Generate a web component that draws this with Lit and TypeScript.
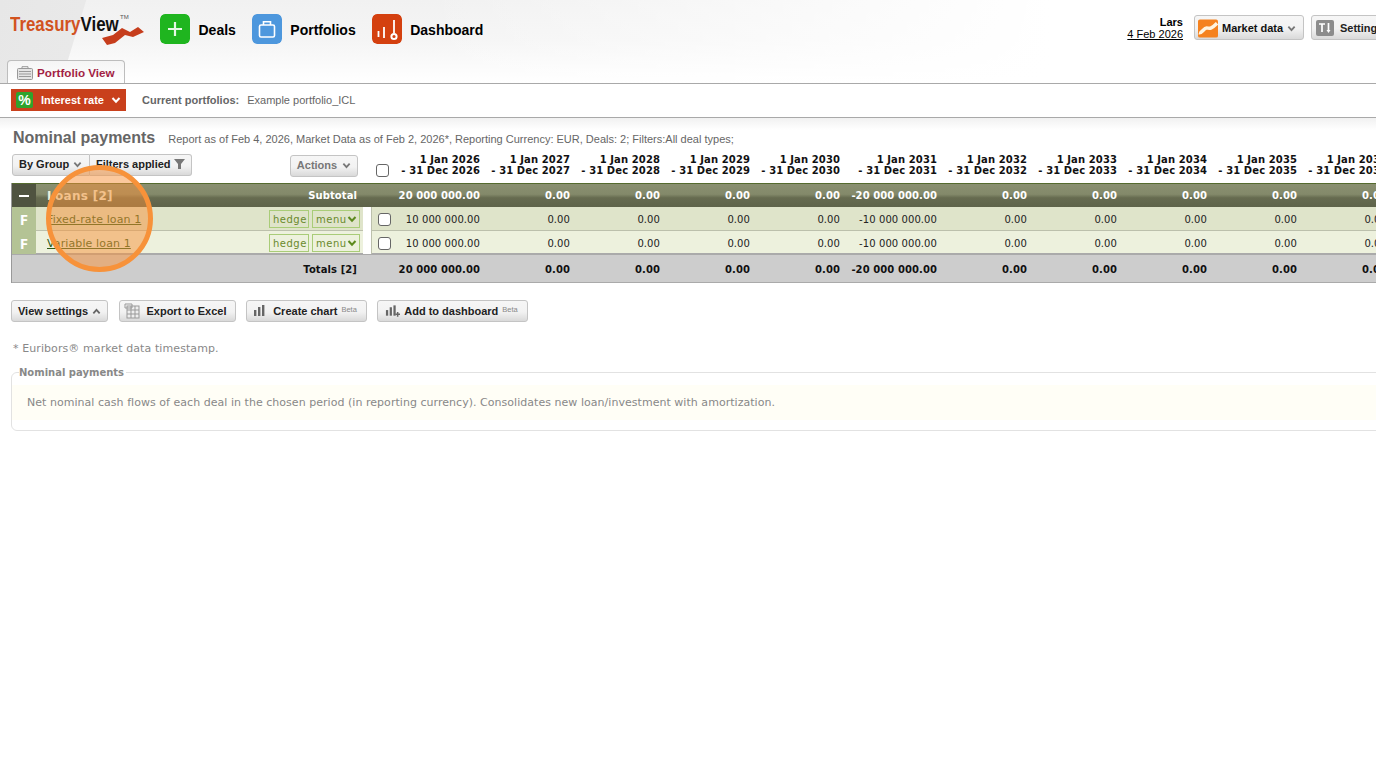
import { LitElement, html, css, svg } from "lit";
import { customElement } from "lit/decorators.js";

const chev = (c = "#666", s = 9) => html`<svg class="chev" width=${s} height=${s} viewBox="0 0 10 10"><path d="M1.5 3 L5 6.8 L8.5 3" fill="none" stroke=${c} stroke-width="2"/></svg>`;
const chevUp = (c = "#666") => html`<svg class="chev" width="9" height="9" viewBox="0 0 10 10"><path d="M1.5 7 L5 3.2 L8.5 7" fill="none" stroke=${c} stroke-width="2"/></svg>`;
const bars = (plus = false) => html`<svg width=${plus ? 15 : 16} height="14" viewBox="0 0 16 14"><g fill="#666"><rect x="1" y="6" width="2.4" height="6"/><rect x="5" y="3" width="2.4" height="9"/><rect x="9" y="1" width="2.4" height="11"/></g>${plus ? svg`<path d="M11 10.5h5M13.5 8v5" stroke="#666" stroke-width="1.6"/>` : ""}</svg>`;

const COLS = ["1 Jan 2026|- 31 Dec 2026", "1 Jan 2027|- 31 Dec 2027", "1 Jan 2028|- 31 Dec 2028", "1 Jan 2029|- 31 Dec 2029", "1 Jan 2030|- 31 Dec 2030", "1 Jan 2031|- 31 Dec 2031", "1 Jan 2032|- 31 Dec 2032", "1 Jan 2033|- 31 Dec 2033", "1 Jan 2034|- 31 Dec 2034", "1 Jan 2035|- 31 Dec 2035", "1 Jan 2036|- 31 Dec 2036"];
const vals = (first: string, sixth: string) => COLS.map((_, i) => (i === 0 ? first : i === 5 ? sixth : "0.00"));

@customElement("app-root")
export class AppRoot extends LitElement {
  static styles = css`
    :host { display: block; position: relative; width: 1376px; height: 769px; overflow: hidden; background: #fff; font-family: "Liberation Sans", Arial, sans-serif; color: #000; }
    .chev { flex: none; }
    .top { height: 83px; box-sizing: border-box; position: relative; overflow: hidden; border-bottom: 0;
      background:
        linear-gradient(90deg, rgba(255,255,255,0) 420px, #fff 1050px),
        linear-gradient(107deg, #e7e7e7 0, #e9e9e9 82px, rgba(255,255,255,0) 83px),
        linear-gradient(180deg, #f1f1f1 0, #f5f5f5 50%, #fff 100%); }
    .mast { display: flex; align-items: flex-start; height: 60px; }
    .logo { width: 150px; height: 50px; flex: none; position: relative; }
    .logo .word { position: absolute; left: 10px; top: 12px; font: bold 21px/24px "Liberation Sans", sans-serif; white-space: nowrap; color: #d2531f; transform: scaleX(.805); transform-origin: left center; }
    .logo .word b { color: #111; }
    .logo sup { position: absolute; left: 120px; top: 14px; font: 6px/6px "Liberation Sans", sans-serif; color: #555; }
    .logo svg { position: absolute; left: 100px; top: 22px; }
    .nav { display: flex; align-items: center; margin-left: 10px; margin-top: 14px; }
    .nav a { display: flex; align-items: center; gap: 8.5px; font-size: 14px; font-weight: bold; margin-right: 16px; }
    .nav a span { padding-top: 2px; }
    .ico { width: 30px; height: 30px; border-radius: 5px; display: block; flex: none; }
    .right { display: flex; align-items: center; margin-left: auto; margin-right: -40px; margin-top: 15px; flex: none; }
    .who { text-align: right; font-size: 11px; line-height: 12px; margin-right: 11px; }
    .who b { font-weight: bold; display: block; }
    .who u { display: block; }
    .btn { display: inline-flex; align-items: center; box-sizing: border-box; border: 1px solid #c4c4c4; border-radius: 3px; background: linear-gradient(180deg, #f6f6f6 0, #f2f2f2 55%, #d9d9d9 100%); font-size: 11px; font-weight: bold; white-space: nowrap; color: #111; }
    .md { height: 25px; width: 110px; padding-left: 3px; padding-top: 1px; gap: 4px; margin-right: 7px; }
    .st { height: 25px; width: 105px; padding-left: 4px; padding-top: 1px; gap: 6px; color: #222; }
    .tabs { padding-left: 7px; height: 23px; display: flex; }
    .tab { box-sizing: border-box; width: 118px; height: 24px; border: 1px solid #bdbdbd; border-bottom: 0; border-radius: 4px 4px 0 0; background: linear-gradient(180deg, #f5f5f5, #fff); display: flex; align-items: center; gap: 4px; padding-left: 9px; font-size: 11.7px; font-weight: bold; color: #a31f45; position: relative; z-index: 1; }
    .bar { height: 35px; box-sizing: border-box; border-top: 1px solid #a9a9a9; border-bottom: 1px solid #a9a9a9; display: flex; align-items: center; padding-left: 11px; padding-bottom: 1px; font-size: 11px; color: #666; }
    .ir { width: 115px; height: 22px; box-sizing: border-box; background: #c9401c; color: #fff; font-weight: bold; font-size: 11px; display: flex; align-items: center; padding-left: 5px; gap: 8px; margin-right: 16px; }
    .ir .chev { margin-left: -1px; }
    .pct { width: 17px; height: 16px; background: #2fa32d; border-radius: 2px; display: flex; align-items: center; justify-content: center; color: #fff; font-size: 14px; font-weight: bold; }
    .bar b { margin-right: 8px; }
    .content { background: linear-gradient(180deg, #f1f1f1 0, #fff 12px); padding-top: 11px; height: 651px; box-sizing: border-box; }
    .title { display: flex; align-items: baseline; padding-left: 13px; height: 20px; color: #666; }
    .title h1 { margin: 0 13px 0 0; font-size: 16px; font-weight: bold; line-height: 18px; color: #666; }
    .title span { font-size: 11px; }
    .grid { display: grid; grid-template-columns: 24px 327px 9px 23px 85px 90px 90px 90px 90px 97px 90px 90px 90px 90px 90px; width: 1375px; margin-left: 12px; }
    .head { height: 29px; margin-top: 5px; }
    .tools { grid-column: 1 / 4; display: flex; align-items: flex-start; position: relative; }
    .tools .btn { height: 22px; padding-left: 6px; padding-bottom: 2px; color: #222; }
    .bg { width: 78px; gap: 4px; border-radius: 3px 0 0 3px; }
    .fa { width: 102px; gap: 3px; border-radius: 0 3px 3px 0; border-left: 0; }
    .ac { width: 68px; margin-left: 98px; margin-top: 1px; gap: 5px; color: #777 !important; justify-content: center; padding-left: 0 !important; }
    .hc { display: flex; align-items: flex-end; padding-left: 4px; padding-bottom: 6px; }
    .cb { width: 13px; height: 13px; box-sizing: border-box; border: 1px solid #666; border-radius: 3px; background: #fff; display: block; }
    .d { font: bold 10px/11px "DejaVu Sans", Verdana, sans-serif; text-align: right; white-space: nowrap; color: #111; letter-spacing: .1px; }
    .d div { height: 11px; }
    .tbl { width: 1365px; margin-left: 11px; border-left: 1px solid #999; overflow: hidden; }
    .tbl .grid { margin-left: 0; }
    .tbl .cell { display: flex; align-items: center; justify-content: flex-end; font: 10px "DejaVu Sans", Verdana, sans-serif; white-space: nowrap; color: #222; letter-spacing: .08px; }
    .group { height: 24px; background: linear-gradient(180deg, #8a9071 0, #83896a 45%, #666b50 60%, #5e634a 100%); border-top: 1px solid #556b2f; box-sizing: border-box; }
    .group .cell { color: #fff !important; font-weight: bold !important; }
    .minus { background: #4f5340; justify-content: center !important; }
    .minus i { display: block; width: 10px; height: 2px; background: #fff; }
    .gname { grid-column: 2 / 5; justify-content: space-between !important; padding-left: 11px; padding-right: 28px; }
    .gname span:first-child { font-size: 12px; color: #eef0dc; letter-spacing: .3px; }
    .gname span:last-child { font-size: 10px; margin-right: 10px; }
    .row { height: 24px; box-sizing: border-box; border-bottom: 1px solid #bcc0ac; padding-top: 1px; }
    .r1 { background: #dfe4ca; }
    .r2 { background: #edf1dd; border-bottom: 2px solid #aaa; padding-top: 2px; }
    .f { background: #b4c395; color: #fff !important; font: bold 15px "Open Sans", sans-serif !important; justify-content: center !important; margin: -1px 0 -1px; }
    .r2 .f, .r2 .sep { margin-top: -2px; }
    .name { justify-content: space-between !important; padding-left: 11px; padding-right: 3px; }
    .name a { color: #2d5a16; text-decoration: underline; font-size: 11px; letter-spacing: .12px; }
    .tags { display: flex; gap: 3px; }
    .tag { height: 18px; box-sizing: border-box; border: 1px solid #a9cc78; font-size: 10px; color: #6a8a2c; display: flex; align-items: center; padding: 0 3px; letter-spacing: .5px; }
    .tag.h { width: 40px; } .tag.m { width: 48px; }
    .sep { background: #fff; border-right: 1px solid #bcc0ac; margin: -1px 0 -1px; }
    .rc { justify-content: flex-start !important; padding-left: 6px; }
    .totals { height: 28px; background: #cdcdcd; border-bottom: 1px solid #aaa; box-sizing: border-box; padding-top: 1px; }
    .totals .cell { font-weight: bold !important; color: #111 !important; }
    .tname { grid-column: 1 / 3; padding-right: 6px; }
    .actions { display: flex; margin: 17px 0 0 11px; }
    .actions .btn { height: 22px; margin-right: 10px; justify-content: center; gap: 4px; color: #222; }
    .actions .vs { width: 97px; margin-right: 11px; }
    .actions .xl { width: 117px; padding-right: 4px; }
    .actions .cc { width: 121px; padding-right: 3px; }
    .actions .ad { width: 151px; padding-right: 2px; }
    .beta { font-size: 7.5px; font-weight: normal; color: #888; align-self: flex-start; margin-top: 4px; margin-left: 0; }
    .note { font: 11px "DejaVu Sans", Verdana, sans-serif; color: #888; letter-spacing: .09px; margin: 20px 0 0 13px; height: 14px; line-height: 14px; }
    fieldset { margin: 11px 0 0 11px; padding: 0; box-sizing: border-box; width: 1400px; height: 64px; border: 1px solid #e2e2e2; border-radius: 6px; }
    legend { font: bold 10px "DejaVu Sans", Verdana, sans-serif; color: #888; margin-left: 7px; padding: 0; padding-right: 2px; line-height: 11px; }
    .info { margin-top: 7px; height: 35px; background: #fffef6; display: flex; align-items: center; padding-left: 15px; font: 11px "DejaVu Sans", Verdana, sans-serif; letter-spacing: .037px; color: #888; }
    .ring { position: absolute; left: 46px; top: 165px; width: 107px; height: 107px; box-sizing: border-box; border: 5px solid #f7923a; border-radius: 50%; background: rgba(247, 146, 58, .5); }
  `;

  private cells(v: string[]) {
    return v.map((x) => html`<div class="cell">${x}</div>`);
  }

  private dealRow(cls: string, name: string) {
    return html`<div class="grid row ${cls}">
      <div class="cell f">F</div>
      <div class="cell name"><a>${name}</a><span class="tags"><span class="tag h">hedge</span><span class="tag m">menu${chev("#5d8a1e", 10)}</span></span></div>
      <div class="sep"></div>
      <div class="cell rc"><span class="cb"></span></div>
      ${this.cells(vals("10 000 000.00", "-10 000 000.00"))}
    </div>`;
  }

  render() {
    return html`
      <header class="top">
        <div class="mast">
          <div class="logo">
            <div class="word">Treasury<b>View</b></div>
            <sup>TM</sup>
            <svg width="46" height="24" viewBox="0 0 46 24"><path d="M2 16 L13 13 L22 6 L30 10 L38 5 L44 10 L33 15 L25 13 L15 21 L7 23 Z" fill="#c63d1c"/></svg>
          </div>
          <nav class="nav">
            <a><svg class="ico" viewBox="0 0 30 30"><rect width="30" height="30" rx="5" fill="#1fb51f"/><path d="M15 8v14M8 15h14" stroke="#e6f8e6" stroke-width="2.2"/></svg><span>Deals</span></a>
            <a><svg class="ico" viewBox="0 0 30 30"><rect width="30" height="30" rx="5" fill="#4d97dd"/><rect x="7.5" y="11" width="15" height="12" rx="1.5" fill="none" stroke="#fff" stroke-width="1.6"/><path d="M11.5 11V7.8h7V11" fill="none" stroke="#fff" stroke-width="1.6"/></svg><span>Portfolios</span></a>
            <a><svg class="ico" viewBox="0 0 30 30"><rect width="30" height="30" rx="5" fill="#d4400f"/><g stroke="#fff" stroke-width="1.8" fill="none"><path d="M6.5 17v6M12 13v11M22 6v13"/><circle cx="22" cy="22.5" r="2.6" stroke-width="2"/></g></svg><span>Dashboard</span></a>
          </nav>
          <div class="right">
            <div class="who"><b>Lars</b><u>4 Feb 2026</u></div>
            <div class="btn md"><svg width="20" height="19" viewBox="0 0 21 19"><rect width="21" height="19" rx="2" fill="#f5821f"/><path d="M1 14 C4 15 6 9 9 9 S13 11 20 4" stroke="#fff4e0" stroke-width="3.6" fill="none"/></svg>Market data ${chev("#777")}</div>
            <div class="btn st"><svg width="18" height="16" viewBox="0 0 18 16"><rect width="18" height="16" rx="2" fill="#8c8c8c"/><path d="M3 4h6M6 4v8M12.5 3v7" stroke="#fff" stroke-width="1.7" fill="none"/><path d="M12.5 13l-2-3h4z" fill="#fff"/></svg>Settings</div>
          </div>
        </div>
        <div class="tabs"><div class="tab"><svg width="16" height="14" viewBox="0 0 16 14"><rect x=".5" y="2.5" width="15" height="11" rx="1" fill="#e4e4e4" stroke="#999"/><path d="M5 2.5V.7h6v1.8M2 5.5h12M2 8h12M2 10.5h12" stroke="#999" fill="none"/></svg>Portfolio View</div></div>
      </header>
      <div class="bar">
        <div class="ir"><span class="pct">%</span>Interest rate ${chev("#fff", 10)}</div>
        <b>Current portfolios:</b> Example portfolio_ICL
      </div>
      <main class="content">
        <div class="title"><h1>Nominal payments</h1><span>Report as of Feb 4, 2026, Market Data as of Feb 2, 2026*, Reporting Currency: EUR, Deals: 2; Filters:All deal types;</span></div>
        <div class="grid head">
          <div class="tools">
            <div class="btn bg">By Group ${chev("#777")}</div>
            <div class="btn fa">Filters applied <svg width="11" height="10" viewBox="0 0 11 10"><path d="M0 0h11L7 5v5H4V5z" fill="#777"/></svg></div>
            <div class="btn ac">Actions ${chev("#777")}</div>
          </div>
          <div class="hc"><span class="cb"></span></div>
          ${COLS.map((c) => { const [a, b] = c.split("|"); return html`<div class="d"><div>${a}</div><div>${b}</div></div>`; })}
        </div>
        <div class="tbl">
          <div class="grid group">
            <div class="cell minus"><i></i></div>
            <div class="cell gname"><span>Loans [2]</span><span>Subtotal</span></div>
            ${this.cells(vals("20 000 000.00", "-20 000 000.00"))}
          </div>
          ${this.dealRow("r1", "Fixed-rate loan 1")}
          ${this.dealRow("r2", "Variable loan 1")}
          <div class="grid totals">
            <div class="cell tname">Totals [2]</div>
            <div></div><div></div>
            ${this.cells(vals("20 000 000.00", "-20 000 000.00"))}
          </div>
        </div>
        <div class="actions">
          <div class="btn vs">View settings ${chevUp("#666")}</div>
          <div class="btn xl"><svg width="18" height="16" viewBox="0 0 18 16"><rect x="3" y="3" width="12" height="12" fill="#eee" stroke="#999"/><path d="M3 7h12M3 11h12M7 3v12M11 3v12M1 1h7v4H1z" stroke="#999" fill="none"/></svg>Export to Excel</div>
          <div class="btn cc">${bars()}Create chart <span class="beta">Beta</span></div>
          <div class="btn ad">${bars(true)}Add to dashboard <span class="beta">Beta</span></div>
        </div>
        <div class="note">* Euribors® market data timestamp.</div>
        <fieldset><legend>Nominal payments</legend>
          <div class="info">Net nominal cash flows of each deal in the chosen period (in reporting currency). Consolidates new loan/investment with amortization.</div>
        </fieldset>
      </main>
      <div class="ring"></div>
    `;
  }
}
